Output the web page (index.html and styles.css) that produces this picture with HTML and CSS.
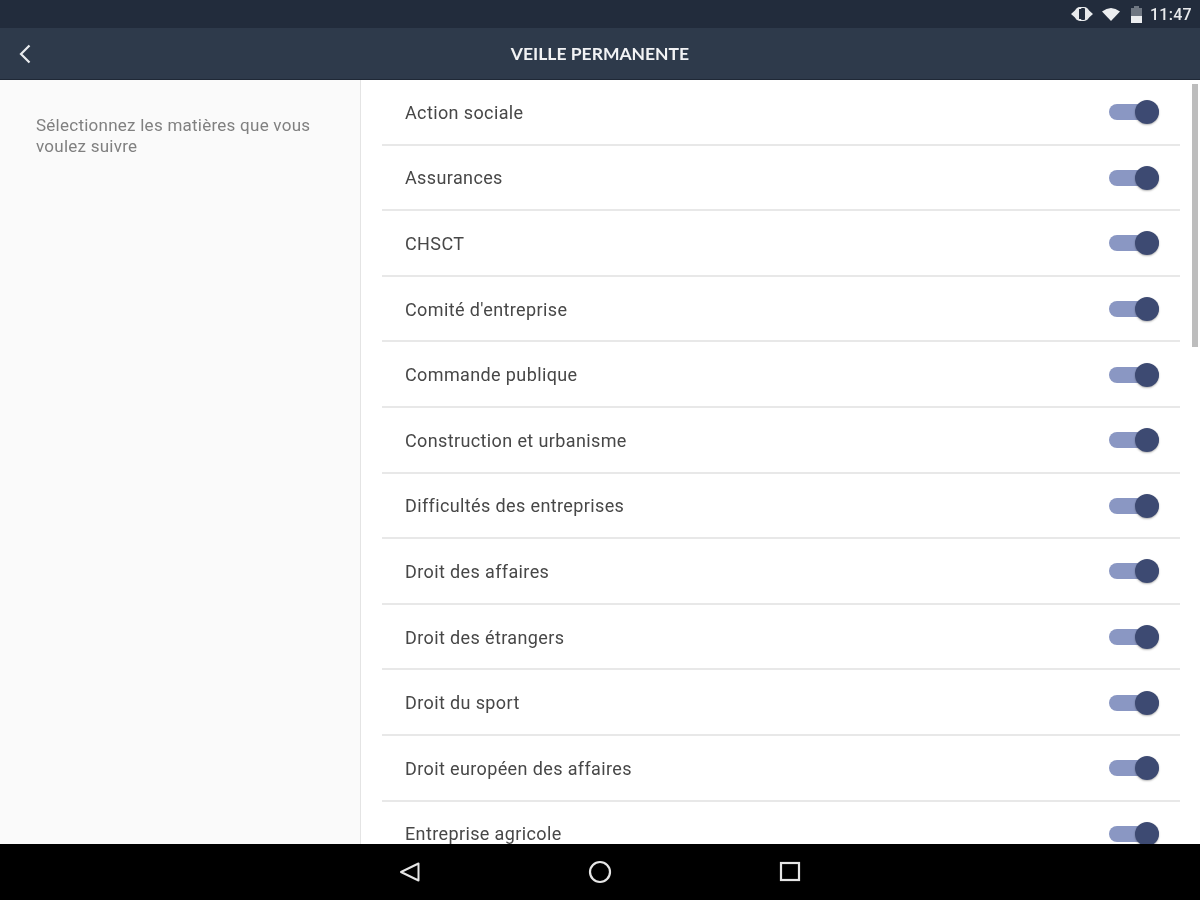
FILE: index.html
```
<!DOCTYPE html>
<html lang="fr">
<head>
<meta charset="utf-8">
<title>Veille permanente</title>
<link rel="stylesheet" href="styles.css">
</head>
<body>
<div class="screen">
  <div class="status">
    <svg class="ic-vib" width="24" height="18" viewBox="0 0 24 18"><path d="M1 9l5-4.500v9zM23 9l-5-4.500v9z" fill="#e8eaec"/><rect x="5" y="2" width="14" height="14" rx="5" fill="#e8eaec"/><rect x="9" y="4" width="6" height="10" fill="#222c3c"/><rect x="11" y="3" width="4" height="12" rx="1" fill="#222c3c"/></svg>
    <svg class="ic-wifi" width="20" height="16" viewBox="0 0 20 16"><path d="M1 5.500Q10 -1.500 19 5.500L10 15z" fill="#eceef0"/></svg>
    <svg class="ic-bat" width="13" height="18" viewBox="0 0 13 18"><path d="M4 1h5v2h3v15H1V3h3z" fill="#6f7782"/><rect x="1" y="11" width="11" height="7" fill="#eceef0"/></svg>
    <span class="time">11:47</span>
  </div>
  <header class="toolbar">
    <svg class="back" width="14" height="22" viewBox="0 0 14 22"><path d="M11.500 2.500L3 11l8.500 8.500" fill="none" stroke="#e9ecef" stroke-width="2.200"/></svg>
    <h1 class="title">VEILLE PERMANENTE</h1>
  </header>
  <main class="content">
    <aside class="side"><p class="hint">Sélectionnez les matières que vous voulez suivre</p></aside>
    <section class="list">
      <div class="scrollbar"></div>
      <div class="row"><span class="label">Action sociale</span><span class="toggle"></span></div>
      <div class="row"><span class="label">Assurances</span><span class="toggle"></span></div>
      <div class="row"><span class="label">CHSCT</span><span class="toggle"></span></div>
      <div class="row"><span class="label">Comité d'entreprise</span><span class="toggle"></span></div>
      <div class="row"><span class="label">Commande publique</span><span class="toggle"></span></div>
      <div class="row"><span class="label">Construction et urbanisme</span><span class="toggle"></span></div>
      <div class="row"><span class="label">Difficultés des entreprises</span><span class="toggle"></span></div>
      <div class="row"><span class="label">Droit des affaires</span><span class="toggle"></span></div>
      <div class="row"><span class="label">Droit des étrangers</span><span class="toggle"></span></div>
      <div class="row"><span class="label">Droit du sport</span><span class="toggle"></span></div>
      <div class="row"><span class="label">Droit européen des affaires</span><span class="toggle"></span></div>
      <div class="row"><span class="label">Entreprise agricole</span><span class="toggle"></span></div>
    </section>
  </main>
  <nav class="navbar">
    <svg width="24" height="24" viewBox="0 0 24 24"><path d="M20.500 3.500v17L3 12z" fill="none" stroke="#e6e6e6" stroke-width="2" stroke-linejoin="round"/></svg>
    <svg width="24" height="24" viewBox="0 0 24 24"><circle cx="12" cy="12" r="10" fill="none" stroke="#e6e6e6" stroke-width="2.200"/></svg>
    <svg width="24" height="24" viewBox="0 0 24 24"><rect x="3" y="3" width="18" height="17" fill="none" stroke="#e6e6e6" stroke-width="2.200"/></svg>
  </nav>
</div>
</body>
</html>
```
FILE: styles.css
```
* { box-sizing: border-box; }
html, body { margin: 0; padding: 0; }
body { font-family: Roboto, "Liberation Sans", sans-serif; background: #fff; }
.screen { width: 1200px; height: 900px; display: flex; flex-direction: column; overflow: hidden; filter: blur(0.45px); }
.status { height: 28px; flex: none; background: #222c3c; display: flex; align-items: center; justify-content: flex-end; padding-right: 8px; color: #e9ebed; }
.ic-vib { margin-right: 7px; }
.ic-wifi { margin-right: 9px; }
.ic-bat { margin-right: 7px; }
.time { font-size: 16px; font-weight: 500; letter-spacing: 0.3px; }
.toolbar { height: 52px; flex: none; background: #2e3a4b; display: flex; align-items: center; justify-content: center; position: relative; border-bottom: 1px solid #1f2836; }
.back { position: absolute; left: 18px; top: 15px; }
.title { margin: 0; font-family: Lato, "Liberation Sans", sans-serif; font-size: 17.5px; font-weight: 700; color: #f2f3f5; }
.content { flex: 1; min-height: 0; display: flex; }
.side { width: 361px; flex: none; background: #fafafa; border-right: 1px solid #e4e4e4; padding: 35px 36px 0; }
.hint { margin: 0; font-size: 17px; letter-spacing: 0.25px; line-height: 21px; color: #808080; width: 290px; }
.list { flex: 1; min-width: 0; position: relative; overflow: hidden; padding: 0 20px 0 21px; background: #fff; }
.scrollbar { position: absolute; left: 831px; top: 4px; width: 6px; height: 263px; background: #bdbdbd; }
.row { height: 65.6px; display: flex; align-items: center; justify-content: space-between; padding: 1px 21px 0 23px; border-bottom: 2px solid #e8e8e8; }
.label { font-size: 18px; letter-spacing: 0.38px; color: #474747; }
.toggle { width: 50px; height: 16px; border-radius: 8px; background: #8a97c3; position: relative; }
.toggle::after { content: ""; position: absolute; right: 0; top: -4px; width: 24px; height: 24px; border-radius: 50%; background: #3d4a72; box-shadow: 0 1px 2px rgba(0,0,0,.3); }
.navbar { height: 56px; flex: none; background: #000; display: flex; align-items: center; justify-content: center; gap: 166px; position: relative; }
```
